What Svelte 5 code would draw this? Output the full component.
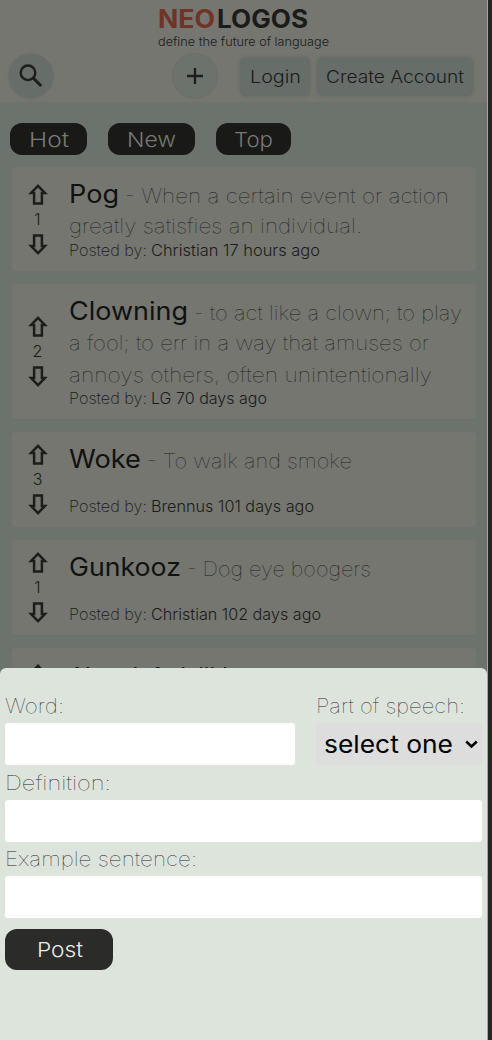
<script>
  const posts = [
    { h: 104, votes: 1, word: ['Pog', 50], lines: [['- When a certain event or action', 324], ['greatly satisfies an individual.', 293]], by: ['Christian 17 hours ago', 169] },
    { h: 135, votes: 2, word: ['Clowning', 119], lines: [['- to act like a clown; to play', 268], ['a fool; to err in a way that amuses or', 360], ['annoys others, often unintentionally', 363]], by: ['LG 70 days ago', 116] },
    { h: 95, votes: 3, word: ['Woke', 72], lines: [['- To walk and smoke', 205]], by: ['Brennus 101 days ago', 163] },
    { h: 95, votes: 1, word: ['Gunkooz', 112], lines: [['- Dog eye boogers', 184]], by: ['Christian 102 days ago', 170] },
    { h: 102, votes: null, word: ['Ahasdafsdsjjkh', 167], lines: [['- sasasassd', 104]], by: null }
  ];

  // Stretches a label horizontally so it fills the width of its slot.
  function fit(node, width) {
    const apply = () => {
      node.style.transform = 'none';
      const natural = node.getBoundingClientRect().width;
      if (natural) node.style.transform = `scaleX(${width / natural})`;
    };
    apply();
    document.fonts?.ready.then(apply);
  }
</script>

{#snippet label(text, width, cls = '')}
  <span class="slot {cls}" style="width:{width}px"><span class="ink" use:fit={width}>{text}</span></span>
{/snippet}

{#snippet arrow(down)}
  <svg class="arrow" class:down width="20" height="21" viewBox="0 0 20 21">
    <path d="M10 1.9 L16.9 9 H13.9 V19.4 H6.1 V9 H3.1 Z" fill="none" stroke="#1d1d1c" stroke-width="2.5" />
  </svg>
{/snippet}

<div class="window">
  <div class="app">
    <header>
      <div class="brand">
        <div class="logo">{@render label('NEO', 57, 'red')}{@render label('LOGOS', 91)}</div>
        <div class="tag">{@render label('define the future of language', 171)}</div>
      </div>
      <nav>
        <button class="round search" aria-label="Search">
          <svg width="44" height="44" viewBox="0 0 44 44" fill="none" stroke="#1c1d1c">
            <circle cx="19" cy="18.8" r="7.3" stroke-width="2.4" />
            <path d="M24.2 24 L32.2 32" stroke-width="3" />
          </svg>
        </button>
        <button class="round add" aria-label="Add">
          <svg width="44" height="44" viewBox="0 0 44 44" fill="none" stroke="#1c1d1c" stroke-width="2.3">
            <path d="M22 14V30M14 22H30" />
          </svg>
        </button>
        <button class="account login">{@render label('Login', 51)}</button>
        <button class="account create">{@render label('Create Account', 138)}</button>
      </nav>
    </header>
    <main>
      <div class="tabs">
        <button style="width:77px">{@render label('Hot', 40)}</button>
        <button style="width:87px">{@render label('New', 49)}</button>
        <button style="width:75px">{@render label('Top', 39)}</button>
      </div>
      {#each posts as p}
        <article style="height:{p.h}px">
          <div class="votes">
            {@render arrow(false)}
            <span>{p.votes ?? ''}</span>
            {@render arrow(true)}
          </div>
          <div class="body" class:partial={!p.by}>
            <div class="text">
              {#each p.lines as l, i}
                <div class="line">
                  {#if i === 0}{@render label(p.word[0], p.word[1], 'word')}{/if}
                  {@render label(l[0], l[1])}
                </div>
              {/each}
            </div>
            {#if p.by}
              <div class="meta">
                {@render label('Posted by:', 78)}{@render label(p.by[0], p.by[1], 'author')}
              </div>
            {/if}
          </div>
        </article>
      {/each}
    </main>
    <form class="sheet">
      <div class="pair">
        <div class="field word-field">
          <label for="w">{@render label('Word:', 59)}</label>
          <input id="w" />
        </div>
        <div class="field pos-field">
          <label for="p">{@render label('Part of speech:', 149)}</label>
          <div class="select" id="p">
            {@render label('select one', 129)}
            <svg width="13" height="9" viewBox="0 0 13 9"><path d="M1.2 1.5 L6.5 6.5 L11.8 1.5" fill="none" stroke="#000" stroke-width="2.5" /></svg>
          </div>
        </div>
      </div>
      <div class="field">
        <label for="d">{@render label('Definition:', 106)}</label>
        <input id="d" />
      </div>
      <div class="field">
        <label for="e">{@render label('Example sentence:', 192)}</label>
        <input id="e" />
      </div>
      <button type="button" class="post">{@render label('Post', 46)}</button>
    </form>
  </div>
</div>

<style>
  :global(body) { margin: 0; background: #262626; overflow: hidden; }
  * { box-sizing: border-box; }
  .window { width: 492px; height: 1040px; background: #262626; font-family: Inter, "Open Sans", sans-serif; color: #1b1c1a; }
  .app { width: 488px; height: 1040px; position: relative; overflow: hidden; background: #6c726c; border-right: 1px solid #a2a6a1; }
  button { border: 0; padding: 0; font: inherit; color: inherit; display: flex; align-items: center; justify-content: center; }
  .slot { display: block; flex: none; white-space: nowrap; text-align: left; }
  .ink { display: inline-block; transform-origin: 0 50%; }
  header { height: 102px; background: #74766f; }
  .brand { height: 54px; padding: 4px 0 0 158px; }
  .logo { display: flex; gap: 2px; font-size: 25px; line-height: 31px; height: 30px; font-weight: 700; }
  .red { color: #713227; }
  .tag { font-size: 11.5px; line-height: 16px; font-weight: 320; }
  nav { display: flex; align-items: center; height: 44px; padding-left: 9px; }
  .round { width: 44px; height: 44px; border-radius: 50%; background: #6c726c; box-shadow: 0 0 2px #5f625d; }
  .search { background: #676d69; }
  .add { margin-left: 120px; }
  .account { height: 37px; background: #676d69; border-radius: 4px; box-shadow: 0 0 4px #5b5f5b; font-size: 17.3px; font-weight: 350; }
  .login { width: 68px; margin-left: 24px; }
  .create { width: 154px; margin-left: 9px; }
  main { display: flex; flex-direction: column; gap: 13px; padding: 21px 11px 0 12px; }
  .tabs { display: flex; gap: 21px; height: 32px; margin: 0 0 -1px -2px; }
  .tabs button { height: 32px; border-radius: 12px; background: #191917; color: #777a72; font-size: 20.3px; font-weight: 300; }
  article { display: flex; flex: none; background: #74766f; border-radius: 4px; }
  .votes { width: 57px; padding-right: 6px; display: flex; flex-direction: column; align-items: center; justify-content: center; font-size: 16px; font-weight: 300; }
  .votes span { height: 29px; line-height: 29px; }
  .arrow { display: block; }
  .down { transform: rotate(180deg); }
  .body { flex: 1; display: flex; flex-direction: column; justify-content: space-between; padding: 11px 0 11px; }
  .partial { padding-top: 13px; }
  .line { display: flex; align-items: baseline; gap: 6px; height: 32px; line-height: 32px; font-size: 20px; font-weight: 140; }
  .line:first-child { margin-top: -0.5px; }
  .word { font-size: 25px; font-weight: 430; color: #111210; }
  .line:first-child .slot:last-child { margin-left: -0.5px; }
  .meta { display: flex; gap: 4px; height: 18px; margin-top: -3px; line-height: 18px; font-size: 15.5px; font-weight: 160; }
  .author { font-weight: 330; }
  .sheet { position: absolute; left: 0; right: 0; bottom: 0; height: 372.5px; padding: 20.8px 5px 0; border-radius: 6px 6px 0 0; background: #dde4dc; color: #292a28; }
  .pair { display: flex; justify-content: space-between; }
  .word-field { width: 290px; }
  .pos-field { width: 166px; }
  .field { height: 76.6px; }
  label { display: block; height: 35px; line-height: 36px; font-size: 20px; font-weight: 140; }
  input { display: block; width: 100%; height: 42px; border: 0; border-radius: 3px; background: #fff; }
  .select { display: flex; align-items: center; justify-content: space-between; height: 42px; padding: 0 4px 0 8px; background: #dcdddc; border-radius: 3px; color: #000; font-size: 24.5px; font-weight: 430; }
  .post { width: 108px; height: 41px; margin-top: 10.6px; border-radius: 12px; background: #2b2b29; color: #eceee4; font-size: 20.5px; font-weight: 350; }
  .post .slot { margin-left: 1px; }
</style>
